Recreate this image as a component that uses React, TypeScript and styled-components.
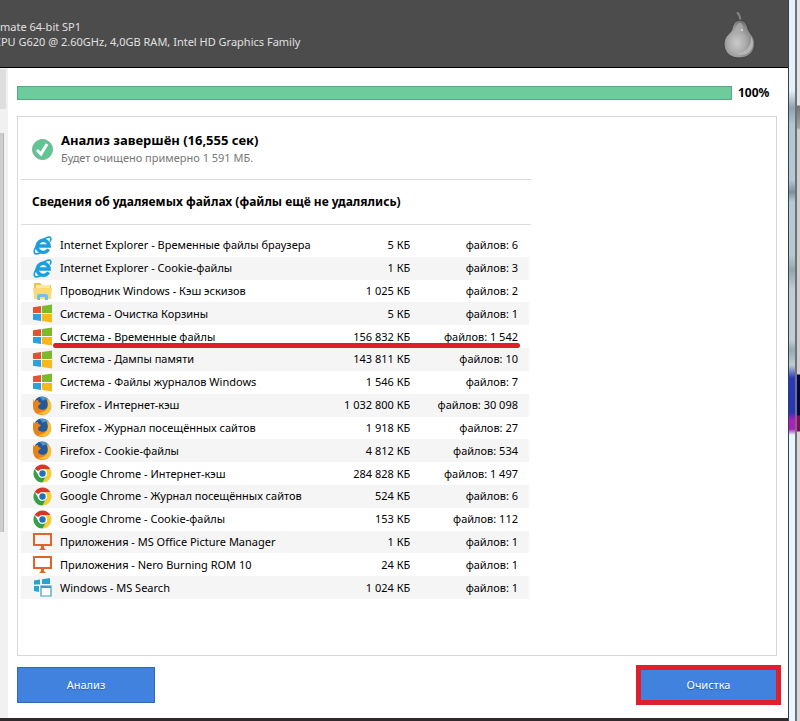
import React from 'react';
import styled, { createGlobalStyle } from 'styled-components';

const Global = createGlobalStyle`
  * { box-sizing: border-box; }
  body {
    margin: 0;
    font: 11px/14px "Noto Sans", "Open Sans", sans-serif;
    color: #000;
    background: #fff;
  }
`;

const Screen = styled.div`
  display: flex;
  min-height: 100vh;
  overflow: hidden;
`;

const AppWindow = styled.div`
  display: flex;
  flex: 1;
  flex-direction: column;
  min-width: 0;
  border-bottom: 3px solid #30292d;
`;

const Header = styled.header`
  display: flex;
  justify-content: space-between;
  align-items: flex-start;
  height: 68px;
  padding: 12px 30px 0 0;
  background: #4c4c4c;
  border-bottom: 1px solid #000;
  color: #e0e0e0;
`;

const SystemInfo = styled.div`
  padding-top: 7px;
  line-height: 15px;
  white-space: nowrap;
`;

const InfoLine = styled.p<{ $clipped?: boolean }>`
  margin: 0;
  text-indent: ${(p) => (p.$clipped ? '-6px' : '0')};
`;

const Workspace = styled.div`
  display: flex;
  flex: 1;
`;

const Sidebar = styled.aside`
  flex: none;
  width: 8px;
  padding: 1px 2px 0 0;
  background: #f1f1f1;
`;

const SidebarTab = styled.div`
  height: 40px;
  margin-bottom: 24px;
  background: #dedede;
`;

const SidebarThumb = styled.div`
  width: 4px;
  height: 399px;
  background: #cdcdcd;
  border-right: 1px solid #b4b4b4;
`;

const Content = styled.main`
  display: flex;
  flex: 1;
  flex-direction: column;
  min-width: 0;
  padding: 17px 7px 13px 9px;
`;

const ProgressRow = styled.div`
  display: flex;
  align-items: center;
  gap: 6px;
  height: 15px;
  margin: 0 7px 16px 0;
  font-size: 12px;
  font-weight: bold;
  color: #000;
`;

const Progress = styled.div`
  flex: 1;
  height: 14px;
  background: #6dcb9c;
  border: 1px solid #5aa583;
`;

const Percent = styled.span`
  width: 36px;
`;

const Panel = styled.section`
  flex: 1;
  margin-right: 4px;
  padding: 0 3px 56px;
  border: 1px solid #d7d7d7;
`;

const Report = styled.div`
  max-width: 510px;
`;

const Summary = styled.div`
  display: flex;
  align-items: center;
  gap: 8px;
  height: 63px;
  padding: 2px 0 0 11px;
  border-bottom: 1px solid #dcdcdc;
`;

const SummaryTitle = styled.h1`
  margin: 0;
  font-size: 13px;
  line-height: 17px;
  color: #000;
`;

const SummaryNote = styled.p`
  margin: 0;
  line-height: 17px;
  color: #777;
`;

const SectionTitle = styled.h2`
  margin: 0;
  height: 45px;
  padding-left: 11px;
  border-bottom: 1px solid #dcdcdc;
  font-size: 12px;
  line-height: 44px;
  color: #000;
`;

const FileTable = styled.table`
  width: calc(100% - 2px);
  height: 365px;
  margin-top: 9px;
  border-collapse: collapse;
`;

const FileRow = styled.tr`
  position: relative;
  &:nth-child(even) { background: #f5f5f5; }
`;

const NameCell = styled.td`
  padding: 0 0 0 12px;
`;

const NameContent = styled.div`
  display: flex;
  align-items: center;
  gap: 8px;
  white-space: nowrap;
  svg { flex: none; }
`;

const ValueCell = styled.td<{ $width: number; $end: number }>`
  width: ${(p) => p.$width}px;
  padding: 0 ${(p) => p.$end}px 0 0;
  text-align: right;
  white-space: nowrap;
`;

const Underline = styled.span`
  position: absolute;
  left: 32px;
  right: 9px;
  bottom: 0;
  height: 5px;
  border-radius: 3px;
  background: #dc1f2b;
`;

const Actions = styled.footer`
  display: flex;
  justify-content: space-between;
  align-items: center;
  height: 40px;
  margin-top: 9px;
`;

const ActionButton = styled.button<{ $marked?: boolean }>`
  width: ${(p) => (p.$marked ? 145 : 138)}px;
  height: ${(p) => (p.$marked ? 40 : 36)}px;
  padding: 0;
  border: ${(p) => (p.$marked ? '5px solid #e01f2c' : '1px solid #3068b4')};
  background: #4182df;
  color: #fff;
  font: inherit;
  text-shadow: 0 1px 1px #285da8;
`;

const WindowFrame = styled.div`
  flex: none;
  width: 9px;
  border-left: 1px solid #2e4352;
  border-right: 2px solid #6a7378;
  background: linear-gradient(
    #e4f1f8 0, #e4f1f8 90px, #8fa1b2 108px, #b4c5d3 125px, #b7c7d5 180px,
    #7e8e9e 192px, #b8c9d6 202px, #bac8d2 255px, #94a4af 270px, #c2cdd3 290px,
    #c2cdd3 340px, #96a8b2 350px, #c0ccd1 365px, #2c38bd 378px, #2934b8 412px,
    #b01cc2 420px, #a722b8 429px, #e9f4fc 435px, #e9f4fc 100%
  );
`;

const Backdrop = styled.div`
  flex: none;
  width: 3px;
  background: linear-gradient(
    #e5e2e2 0, #e5e2e2 105px, #77716f 106px, #a9a4a2 128px, #d5cccb 130px,
    #d5cccb 374px, #060642 375px, #060642 415px, #8c0860 416px, #8c0860 431px,
    #ddd6d5 432px, #ddd6d5 100%
  );
`;

const PearIcon = () => (
  <svg width="36" height="49" viewBox="0 0 36 49" aria-hidden="true">
    <defs>
      <radialGradient id="pear" cx="0.42" cy="0.6" r="0.6">
        <stop offset="0" stopColor="#cacaca" />
        <stop offset="0.45" stopColor="#adadad" />
        <stop offset="0.8" stopColor="#8a8a8a" />
        <stop offset="1" stopColor="#6a6a6a" />
      </radialGradient>
    </defs>
    <path d="M15 0q4 4 3 9" fill="none" stroke="#858585" strokeWidth="2" />
    <path d="M18 8c-5 0-7 4-8 9-1 5-8 6-8 15 0 9 7 14 15 14 9 0 16-5 16-15 0-6-5-9-7-14-1-5-3-9-8-9z" fill="url(#pear)" stroke="#404040" />
    <path d="M29 24c4 8 2 15-5 18-3 1-7 1-10 0 10-1 16-8 15-18z" fill="#c4c4c4" opacity="0.7" />
    <path d="M17 11c-3 2-4 6-5 10 4 1 9 0 9-5 0-3-1-5-4-5z" fill="#aeaeae" opacity="0.7" />
    <circle cx="20" cy="18" r="1" fill="#ddd" />
  </svg>
);

const CheckIcon = () => (
  <svg width="21" height="21" viewBox="0 0 21 21" aria-hidden="true">
    <circle cx="10.500" cy="10.500" r="10" fill="#5fc593" stroke="#77ad92" />
    <path d="M5 11l4 4 6-10" fill="none" stroke="#fff" strokeWidth="3" />
  </svg>
);

const IeIcon = () => (
  <svg width="19" height="19" viewBox="0 0 19 19" aria-hidden="true">
    <path d="M15.500 13.200A6 6 0 1 1 16.200 10H6" fill="none" stroke="#1c9fdc" strokeWidth="3.400" />
    <path d="M2.600 18C-.5 16.500 2 10 7.500 5.500 12 1.500 17 .2 17.800 2c.5 1-.2 2.500-.8 3.500" fill="none" stroke="#1c9fdc" strokeWidth="1.600" />
    <path d="M2 17.500c2 1 5-.5 7-2" fill="none" stroke="#1c9fdc" strokeWidth="1.600" />
  </svg>
);

const FolderIcon = () => (
  <svg width="19" height="19" viewBox="0 0 19 19" aria-hidden="true">
    <path d="M1 1h6l2 2h9v14H1z" fill="#e8c350" />
    <path d="M3 3h14v4H3z" fill="#fbe9a0" />
    <path d="M0 6h19l-1 11H1z" fill="#f8dc72" />
    <path d="M4 18v-4q0-2 2-2h7q2 0 2 2v4h-3v-3H7v3z" fill="#6fc2e4" />
  </svg>
);

const WindowsIcon = () => (
  <svg width="19" height="19" viewBox="0 0 19 19" aria-hidden="true">
    <path d="M0 3.300l8-1.200v7H0z" fill="#e5532c" />
    <path d="M9 2L19 .5v8.600H9z" fill="#7cba2c" />
    <path d="M0 10h8v7L0 15.800z" fill="#2d9fda" />
    <path d="M9 10h10v8.600L9 17.100z" fill="#f8b81c" />
  </svg>
);

const FirefoxIcon = () => (
  <svg width="19" height="19" viewBox="0 0 19 19" aria-hidden="true">
    <circle cx="9" cy="9" r="8.500" fill="#245a9d" />
    <path d="M7 1c3-1 7 0 8 3-3-1-4 0-5 1z" fill="#4e97cf" />
    <path d="M1 3c0 2 0 2 1 2 1-1 2-1 3-1 0 2 1 2 3 3-1 2-3 2-3 4 1 3 6 4 9 1 1-2 1-4 0-7l-1-2c4 2 5 6 5 7 0 6-4 9-9 9-6 0-9-4-9-9 0-3 0-5 1-7z" fill="#e88219" />
    <path d="M14 3c5 3 6 9 2 13-3 3-8 3-11 1 8 0 12-6 9-14z" fill="#f7c033" />
  </svg>
);

const ChromeIcon = () => (
  <svg width="19" height="19" viewBox="0 0 19 19" aria-hidden="true">
    <path d="M9.500 9.500L1.700 5A9 9 0 0 1 17.300 5z" fill="#d9362b" />
    <path d="M9.500 5h7.800a9 9 0 0 1-7.800 13.500l4-7z" fill="#f8cd31" />
    <path d="M1.700 5l4 6.700 7.700 0-3.900 6.800A9 9 0 0 1 1.700 5z" fill="#35a047" />
    <circle cx="9.500" cy="9.500" r="4.500" fill="#fff" />
    <circle cx="9.500" cy="9.500" r="3.200" fill="#2470b8" />
  </svg>
);

const MonitorIcon = () => (
  <svg width="19" height="19" viewBox="0 0 19 19" aria-hidden="true">
    <path d="M1 2h17v11H1z" fill="none" stroke="#e0652c" strokeWidth="2" />
    <path d="M8 13h3v3l2 2H6l2-2z" fill="#e0652c" />
  </svg>
);

const WindowsSearchIcon = () => (
  <svg width="19" height="19" viewBox="0 0 19 19" aria-hidden="true">
    <path d="M1 2.500L7 1.500v5H1zM9 1.200L17 0v6H9zM1 8h5v6l-5-1z" fill="#2ba2cd" />
    <path d="M8 8h10v10H8z" fill="#fff" stroke="#3d9fc2" strokeWidth="1.200" />
    <path d="M8 8h10v2H8z" fill="#3d9fc2" />
  </svg>
);

const icons = {
  ie: IeIcon,
  folder: FolderIcon,
  windows: WindowsIcon,
  firefox: FirefoxIcon,
  chrome: ChromeIcon,
  monitor: MonitorIcon,
  search: WindowsSearchIcon,
};

interface FileEntry {
  icon: keyof typeof icons;
  name: string;
  size: string;
  count: string;
  underlined?: boolean;
}

const entries: FileEntry[] = [
  { icon: 'ie', name: 'Internet Explorer - Временные файлы браузера', size: '5', count: '6' },
  { icon: 'ie', name: 'Internet Explorer - Cookie-файлы', size: '1', count: '3' },
  { icon: 'folder', name: 'Проводник Windows - Кэш эскизов', size: '1 025', count: '2' },
  { icon: 'windows', name: 'Система - Очистка Корзины', size: '5', count: '1' },
  { icon: 'windows', name: 'Система - Временные файлы', size: '156 832', count: '1 542', underlined: true },
  { icon: 'windows', name: 'Система - Дампы памяти', size: '143 811', count: '10' },
  { icon: 'windows', name: 'Система - Файлы журналов Windows', size: '1 546', count: '7' },
  { icon: 'firefox', name: 'Firefox - Интернет-кэш', size: '1 032 800', count: '30 098' },
  { icon: 'firefox', name: 'Firefox - Журнал посещённых сайтов', size: '1 918', count: '27' },
  { icon: 'firefox', name: 'Firefox - Cookie-файлы', size: '4 812', count: '534' },
  { icon: 'chrome', name: 'Google Chrome - Интернет-кэш', size: '284 828', count: '1 497' },
  { icon: 'chrome', name: 'Google Chrome - Журнал посещённых сайтов', size: '524', count: '6' },
  { icon: 'chrome', name: 'Google Chrome - Cookie-файлы', size: '153', count: '112' },
  { icon: 'monitor', name: 'Приложения - MS Office Picture Manager', size: '1', count: '1' },
  { icon: 'monitor', name: 'Приложения - Nero Burning ROM 10', size: '24', count: '1' },
  { icon: 'search', name: 'Windows - MS Search', size: '1 024', count: '1' },
];

export default function App() {
  return (
    <Screen>
      <Global />
      <AppWindow>
        <Header>
          <SystemInfo>
            <InfoLine>mate 64-bit SP1</InfoLine>
            <InfoLine $clipped>CPU G620 @ 2.60GHz, 4,0GB RAM, Intel HD Graphics Family</InfoLine>
          </SystemInfo>
          <PearIcon />
        </Header>
        <Workspace>
          <Sidebar>
            <SidebarTab />
            <SidebarThumb />
          </Sidebar>
          <Content>
            <ProgressRow>
              <Progress role="progressbar" aria-label="Анализ" aria-valuenow={100} />
              <Percent>100%</Percent>
            </ProgressRow>
            <Panel>
              <Report>
                <Summary>
                  <CheckIcon />
                  <div>
                    <SummaryTitle>Анализ завершён (16,555 сек)</SummaryTitle>
                    <SummaryNote>Будет очищено примерно 1 591 МБ.</SummaryNote>
                  </div>
                </Summary>
                <SectionTitle>Сведения об удаляемых файлах (файлы ещё не удалялись)</SectionTitle>
                <FileTable>
                  <tbody>
                    {entries.map((entry) => {
                      const Icon = icons[entry.icon];
                      return (
                        <FileRow key={entry.name}>
                          <NameCell>
                            <NameContent>
                              <Icon />
                              {entry.name}
                            </NameContent>
                            {entry.underlined && <Underline />}
                          </NameCell>
                          <ValueCell $width={100} $end={0}>{entry.size} КБ</ValueCell>
                          <ValueCell $width={119} $end={11}>файлов: {entry.count}</ValueCell>
                        </FileRow>
                      );
                    })}
                  </tbody>
                </FileTable>
              </Report>
            </Panel>
            <Actions>
              <ActionButton type="button">Анализ</ActionButton>
              <ActionButton type="button" $marked>Очистка</ActionButton>
            </Actions>
          </Content>
        </Workspace>
      </AppWindow>
      <WindowFrame />
      <Backdrop />
    </Screen>
  );
}
